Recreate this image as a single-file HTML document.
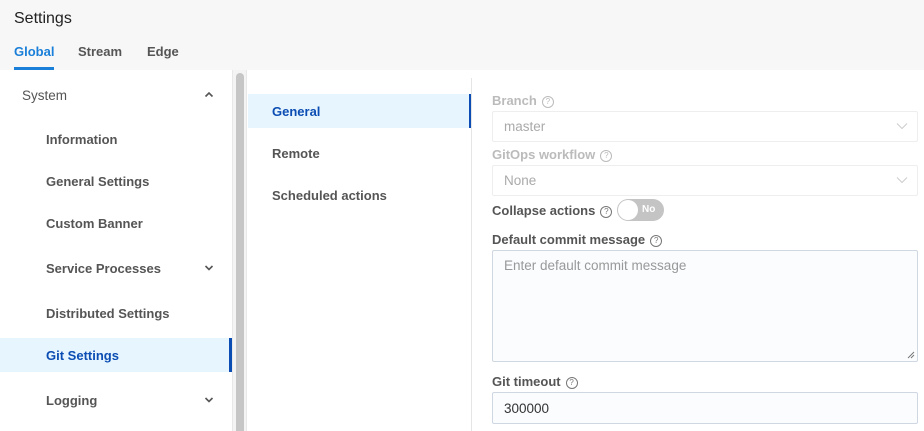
<!DOCTYPE html>
<html><head><meta charset="utf-8"><style>
*{margin:0;padding:0;box-sizing:border-box}
html,body{width:924px;height:431px;overflow:hidden}
body{background:#fff;font-family:"Liberation Sans",sans-serif;position:relative;color:#555}
.a{position:absolute;white-space:nowrap}
.hdr{left:0;top:0;width:924px;height:70px;background:#f7f7f7}
.t{font-size:13px;font-weight:bold;color:#555}
.q{display:inline-block;width:12px;height:12px;border:1px solid #777;border-radius:50%;font-size:8px;line-height:10px;text-align:center;font-weight:normal;color:#777;vertical-align:1px;margin-left:5px}
.box{border:1px solid #dde3ea;border-radius:2px;background:#fff}
.lab{font-size:13px;font-weight:bold}
</style></head><body>
<div class="a hdr"></div>
<div class="a" style="left:14px;top:10px;font-size:16px;color:#222">Settings</div>
<div class="a t" style="left:14px;top:44px;color:#1a7fd8">Global</div>
<div class="a t" style="left:78px;top:44px">Stream</div>
<div class="a t" style="left:147px;top:44px">Edge</div>
<div class="a" style="left:14px;top:67px;width:40px;height:3px;background:#1a7fd8"></div>

<div class="a t" style="left:22px;top:88px;font-weight:normal;font-size:13.5px">System</div>
<svg class="a" style="left:204px;top:91px" width="10" height="8"><path d="M1.5 5.5L5 2L8.5 5.5" stroke="#555" stroke-width="1.6" fill="none"/></svg>
<div class="a t" style="left:46px;top:132px">Information</div>
<div class="a t" style="left:46px;top:174px">General Settings</div>
<div class="a t" style="left:46px;top:216px">Custom Banner</div>
<div class="a t" style="left:46px;top:261px">Service Processes</div>
<svg class="a" style="left:204px;top:264px" width="10" height="8"><path d="M1.5 2L5 5.5L8.5 2" stroke="#555" stroke-width="1.6" fill="none"/></svg>
<div class="a t" style="left:46px;top:306px">Distributed Settings</div>
<div class="a" style="left:0;top:338px;width:232px;height:34px;background:#e6f5fe"></div>
<div class="a" style="left:229px;top:338px;width:3px;height:34px;background:#0b4db3"></div>
<div class="a t" style="left:46px;top:348px;color:#0b4db3">Git Settings</div>
<div class="a t" style="left:46px;top:393px">Logging</div>
<svg class="a" style="left:204px;top:396px" width="10" height="8"><path d="M1.5 2L5 5.5L8.5 2" stroke="#555" stroke-width="1.6" fill="none"/></svg>

<div class="a" style="left:232px;top:70px;width:15px;height:361px;background:#f4f4f4;border-left:1px solid #e8e8e8;border-right:1px solid #e8e8e8"></div>
<div class="a" style="left:236px;top:73px;width:8px;height:358px;background:#c6c6c6;border-radius:4px 4px 0 0"></div>

<div class="a" style="left:248px;top:94px;width:222px;height:34px;background:#e6f5fe"></div>
<div class="a" style="left:469px;top:94px;width:3px;height:34px;background:#0b4db3"></div>
<div class="a" style="left:471px;top:78px;width:1px;height:353px;background:#e5e5e5"></div>
<div class="a t" style="left:272px;top:104px;color:#0b4db3">General</div>
<div class="a t" style="left:272px;top:146px">Remote</div>
<div class="a t" style="left:272px;top:188px">Scheduled actions</div>

<div class="a lab" style="left:492px;top:93px;color:#bbb">Branch<span class="q" style="border-color:#bbb;color:#bbb">?</span></div>
<div class="a box" style="left:492px;top:111px;width:426px;height:31px;border-color:#eee"></div>
<div class="a" style="left:504px;top:119px;font-size:13.5px;color:#aaa">master</div>
<svg class="a" style="left:896px;top:122px" width="12" height="8"><path d="M1 1.5L6 6.5L11 1.5" stroke="#ccc" stroke-width="1" fill="none"/></svg>
<div class="a lab" style="left:492px;top:147px;color:#bbb">GitOps workflow<span class="q" style="border-color:#bbb;color:#bbb">?</span></div>
<div class="a box" style="left:492px;top:165px;width:426px;height:31px;border-color:#eee"></div>
<div class="a" style="left:504px;top:173px;font-size:13.5px;color:#aaa">None</div>
<svg class="a" style="left:896px;top:176px" width="12" height="8"><path d="M1 1.5L6 6.5L11 1.5" stroke="#ccc" stroke-width="1" fill="none"/></svg>
<div class="a lab" style="left:492px;top:203px">Collapse actions<span class="q">?</span></div>
<div class="a" style="left:617px;top:199px;width:47px;height:22px;border-radius:11px;background:#c4c4c4"></div>
<div class="a" style="left:618px;top:200px;width:20px;height:20px;border-radius:50%;background:#fff"></div>
<div class="a" style="left:642px;top:204px;font-size:10px;color:#fff;font-weight:bold">No</div>
<div class="a lab" style="left:492px;top:232px">Default commit message<span class="q">?</span></div>
<div class="a box" style="left:492px;top:250px;width:426px;height:112px;background:#fafcfe;border-color:#cfd8e2"></div>
<div class="a" style="left:504px;top:258px;font-size:13.5px;color:#999">Enter default commit message</div>
<svg class="a" style="left:907px;top:351px" width="8" height="8"><path d="M7 1L1 7M7 4L4 7" stroke="#777" stroke-width="1"/></svg>
<div class="a lab" style="left:492px;top:374px">Git timeout<span class="q">?</span></div>
<div class="a box" style="left:492px;top:392px;width:426px;height:32px;background:#fafcfe;border-color:#cfd8e2"></div>
<div class="a" style="left:504px;top:401px;font-size:13.5px;color:#333">300000</div>
</body></html>
